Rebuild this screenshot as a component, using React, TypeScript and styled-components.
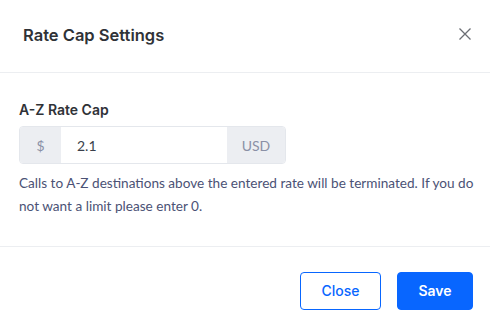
import React from "react";
import styled, { createGlobalStyle } from "styled-components";

const GlobalStyle = createGlobalStyle`
  html, body {
    margin: 0;
    padding: 0;
    background: #ffffff;
  }
  * {
    box-sizing: border-box;
  }
`;

const Modal = styled.div`
  width: 490px;
  height: 331px;
  background: #ffffff;
  display: flex;
  flex-direction: column;
`;

const Header = styled.div`
  height: 73px;
  padding: 0 18px 0 23px;
  display: flex;
  align-items: center;
  justify-content: space-between;
  border-bottom: 1px solid #eceef1;
`;

const Title = styled.h5`
  margin: 0 0 3px;
  font-family: Inter, "Open Sans", sans-serif;
  font-size: 16.5px;
  font-weight: 600;
  color: #2f3237;
`;

const CloseIcon = styled.button`
  border: none;
  background: transparent;
  padding: 0;
  width: 14px;
  height: 14px;
  display: flex;
  cursor: pointer;
  margin-bottom: 5px;
`;

const Body = styled.div`
  width: 490px;
  padding: 28px 12px 0 19px;
  height: 174px;
  border-bottom: 1px solid #eceef1;
`;

const Label = styled.label`
  display: block;
  font-family: Inter, "Open Sans", sans-serif;
  font-size: 14px;
  font-weight: 600;
  color: #2f3237;
  margin-bottom: 8px;
`;

const InputGroup = styled.div`
  display: flex;
  width: 267px;
  height: 38px;
  border-radius: 4px;
  overflow: hidden;
  border: 1px solid #e4e7ec;
`;

const Addon = styled.span<{ $width: number }>`
  width: ${(p) => p.$width}px;
  flex: none;
  display: flex;
  align-items: center;
  justify-content: center;
  background: #eceef2;
  font-family: Lato, "Noto Sans", sans-serif;
  font-size: 14px;
  color: #8a90a6;
`;

const Input = styled.input`
  flex: 1;
  min-width: 0;
  border: none;
  outline: none;
  padding: 0 16px;
  font-family: Lato, "Noto Sans", sans-serif;
  font-size: 14px;
  color: #3a3f4b;
  background: #ffffff;
`;

const Help = styled.p`
  margin: 8px 0 0;
  font-family: Lato, "Noto Sans", sans-serif;
  font-size: 13.6px;
  line-height: 23px;
  color: #4b5275;
`;

const Footer = styled.div`
  flex: 1;
  display: flex;
  justify-content: flex-end;
  align-items: center;
  gap: 16px;
  padding: 3px 17px 0 0;
`;

const Button = styled.button<{ $primary?: boolean; $width: number }>`
  width: ${(p) => p.$width}px;
  height: 38px;
  border-radius: 4px;
  border: 1px solid #0866ff;
  background: ${(p) => (p.$primary ? "#0866ff" : "#ffffff")};
  color: ${(p) => (p.$primary ? "#ffffff" : "#0866ff")};
  font-family: Inter, "Open Sans", sans-serif;
  font-size: 14px;
  font-weight: ${(p) => (p.$primary ? 600 : 500)};
  cursor: pointer;
`;

export default function App() {
  return (
    <>
      <GlobalStyle />
      <Modal>
        <Header>
          <Title>Rate Cap Settings</Title>
          <CloseIcon aria-label="Close">
            <svg width="14" height="14" viewBox="0 0 14 14">
              <path d="M1.5 1.5 L12.5 12.5 M12.5 1.5 L1.5 12.5" stroke="#6b6e74" strokeWidth="1.3" fill="none" />
            </svg>
          </CloseIcon>
        </Header>
        <Body>
          <Label>A-Z Rate Cap</Label>
          <InputGroup>
            <Addon $width={41}>$</Addon>
            <Input defaultValue="2.1" />
            <Addon $width={58}>USD</Addon>
          </InputGroup>
          <Help>
            Calls to A-Z destinations above the entered rate will be terminated. If you do not want a limit please enter 0.
          </Help>
        </Body>
        <Footer>
          <Button $width={81}>Close</Button>
          <Button $primary $width={76}>Save</Button>
        </Footer>
      </Modal>
    </>
  );
}
